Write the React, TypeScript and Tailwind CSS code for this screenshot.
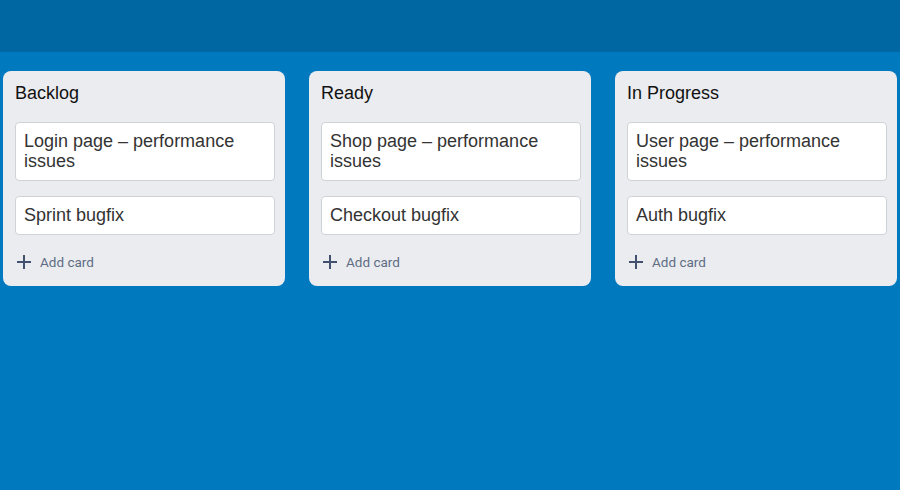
const LISTS = [
  { title: "Backlog", cards: ["Login page – performance issues", "Sprint bugfix"] },
  { title: "Ready", cards: ["Shop page – performance issues", "Checkout bugfix"] },
  { title: "In Progress", cards: ["User page – performance issues", "Auth bugfix"] },
];

function PlusIcon() {
  return (
    <svg width="14" height="14" viewBox="0 0 14 14" className="shrink-0 text-[#42526e]">
      <path d="M7 0v14M0 7h14" stroke="currentColor" strokeWidth="2" fill="none" />
    </svg>
  );
}

function List({ title, cards }: { title: string; cards: string[] }) {
  return (
    <div className="flex w-[282px] shrink-0 flex-col rounded-lg bg-[#ebecf0] pb-3 pl-3 pr-[10px] pt-3">
      <h2 className="mb-[18px] text-[18px] font-normal leading-[1.15] text-[#111]">{title}</h2>
      <div className="flex flex-col gap-[15px]">
        {cards.map((c) => (
          <div
            key={c}
            className="rounded border border-[#cfd2d6] bg-white p-2 text-[18px] leading-[1.15] text-[#333]"
          >
            {c}
          </div>
        ))}
      </div>
      <button
        type="button"
        className="mt-[15px] flex h-6 items-center gap-[9px] pl-0.5 text-left"
      >
        <PlusIcon />
        <span className="font-['Roboto',sans-serif] text-[13.5px] text-[#5e6c84]">Add card</span>
      </button>
    </div>
  );
}

export default function App() {
  return (
    <div className="flex h-[490px] w-[900px] flex-col overflow-hidden bg-[#0079bf] font-['Liberation_Sans',Arial,sans-serif]">
      <header className="h-[52px] shrink-0 bg-[#0067a3]" />
      <main className="mt-[19px] flex items-start gap-6 pl-[3px]">
        {LISTS.map((l) => (
          <List key={l.title} title={l.title} cards={l.cards} />
        ))}
      </main>
    </div>
  );
}
